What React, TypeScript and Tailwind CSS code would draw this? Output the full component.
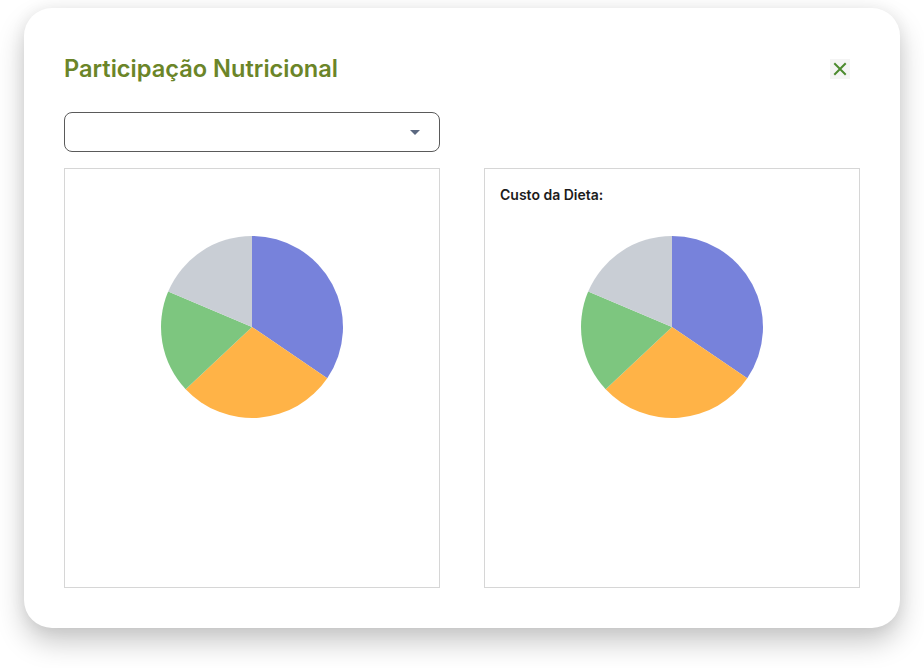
import React from "react";

type Slice = { start: number; end: number; color: string };

const slices: Slice[] = [
  { start: 0, end: 124.2, color: "#7782DB" },
  { start: 124.2, end: 226.8, color: "#FFB347" },
  { start: 226.8, end: 292.9, color: "#7DC67F" },
  { start: 292.9, end: 360, color: "#C9CED5" },
];

function pt(cx: number, cy: number, r: number, deg: number) {
  const a = (deg * Math.PI) / 180;
  return [cx + r * Math.sin(a), cy - r * Math.cos(a)];
}

function Pie() {
  const cx = 92;
  const cy = 92;
  const r = 91;
  return (
    <svg width="184" height="184" viewBox="0 0 184 184">
      {slices.map((s, i) => {
        const [x1, y1] = pt(cx, cy, r, s.start);
        const [x2, y2] = pt(cx, cy, r, s.end);
        const large = s.end - s.start > 180 ? 1 : 0;
        return (
          <path
            key={i}
            d={`M${cx},${cy} L${x1},${y1} A${r},${r} 0 ${large} 1 ${x2},${y2} Z`}
            fill={s.color}
          />
        );
      })}
    </svg>
  );
}

export default function App() {
  return (
    <div className="min-h-[668px] bg-white px-6 pt-2" style={{ fontFamily: "Inter, 'Noto Sans', sans-serif" }}>
      <div className="rounded-[28px] bg-white px-10 pt-[46px] pb-10 shadow-[0_14px_28px_rgba(0,0,0,0.22),0_0_16px_rgba(0,0,0,0.06)]">
        <div className="flex h-[30px] items-center justify-between">
          <h1 className="text-[23.6px] font-semibold leading-[30px] text-[#6B8528]">Participação Nutricional</h1>
          <button className="mr-[10px] flex h-5 w-5 items-center justify-center bg-[#f4f4f4]">
            <svg width="14" height="14" viewBox="0 0 14 14">
              <path d="M2 2 L12 12 M12 2 L2 12" stroke="#4C8A2E" strokeWidth="2" strokeLinecap="square" />
            </svg>
          </button>
        </div>
        <div className="mt-7 flex h-10 w-[376px] items-center justify-end rounded-lg border border-[#5a5a5a] pr-[19px]">
          <svg width="10" height="5" viewBox="0 0 10 5">
            <path d="M0 0 L10 0 L5 5 Z" fill="#5B6880" />
          </svg>
        </div>
        <div className="mt-4 flex gap-[44px]">
          <div className="flex h-[420px] w-[376px] flex-col items-center border border-[#d6d6d6]">
            <div className="mt-[66px]">
              <Pie />
            </div>
          </div>
          <div className="relative flex h-[420px] w-[376px] flex-col items-center border border-[#d6d6d6]">
            <div className="absolute left-[15px] top-[15px] text-[14px] font-semibold text-[#1c1c1c]">Custo da Dieta:</div>
            <div className="mt-[66px]">
              <Pie />
            </div>
          </div>
        </div>
      </div>
    </div>
  );
}
